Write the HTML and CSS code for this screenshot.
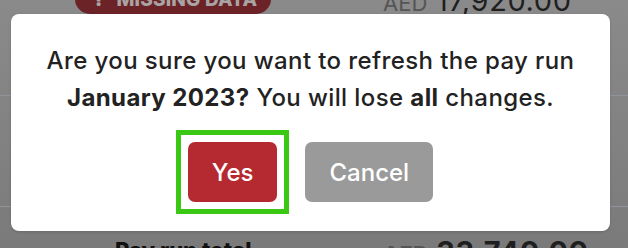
FILE: index.html
```html
<!DOCTYPE html>
<html lang="en">
<head>
<meta charset="utf-8">
<title>Refresh pay run</title>
<link rel="stylesheet" href="styles.css">
</head>
<body>
<div class="page">
  <div class="row row-top">
    <span class="badge"><span class="badge-icon">!</span>MISSING DATA</span>
    <span class="amount"><span class="cur">AED</span> 17,920.00</span>
  </div>
  <div class="row row-mid"></div>
  <div class="row row-total">
    <span class="total-label">Pay run total</span>
    <span class="amount amount-bold"><span class="cur">AED</span> 33,740.00</span>
  </div>
</div>

<div class="modal" role="dialog">
  <p class="message">Are you sure you want to refresh the pay run<br><b>January 2023?</b> You will lose <b>all</b> changes.</p>
  <div class="actions">
    <button class="btn btn-yes">Yes</button>
    <button class="btn btn-cancel">Cancel</button>
  </div>
</div>
</body>
</html>
```
FILE: styles.css
```css
html, body {
  margin: 0;
  padding: 0;
  width: 628px;
  height: 248px;
  overflow: hidden;
}
body {
  position: relative;
  font-family: Inter, "Noto Sans", sans-serif;
  background: linear-gradient(to bottom, #8a8a8a 0%, #818181 60%, #7a7a7a 100%);
}

.page {
  margin-top: -22px;
  height: 270px;
  overflow: hidden;
}
.row {
  display: grid;
  grid-template-columns: 308px 1fr;
  padding-left: 75px;
  border-bottom: 1px solid #8f939a;
  box-sizing: border-box;
}
.row-top {
  height: 118px;
  padding-top: 6px;
  align-items: start;
}
.row-mid {
  height: 111px;
}
.row-total {
  height: 41px;
  padding-top: 30px;
  padding-left: 115px;
  grid-template-columns: 268px 1fr;
  border-bottom: none;
}

.badge {
  justify-self: start;
  display: inline-flex;
  align-items: center;
  gap: 14px;
  height: 30px;
  width: 196px;
  box-sizing: border-box;
  padding-left: 20px;
  border-radius: 15px;
  background: #6b2327;
  color: #a9a3a3;
  font-weight: 800;
  font-size: 19px;
  letter-spacing: 0.2px;
}
.badge-icon {
  font-weight: 900;
}

.amount {
  font-size: 29px;
  font-weight: 400;
  letter-spacing: 0.6px;
  color: #1f1f1f;
  line-height: 30px;
  margin-top: 2px;
}
.amount .cur {
  font-size: 22px;
  letter-spacing: 0;
  color: #555;
}
.amount-bold {
  font-weight: 700;
  margin-top: 0;
}
.total-label {
  font-size: 22px;
  font-weight: 800;
  color: #111;
}

.modal {
  position: absolute;
  left: 11px;
  top: 14px;
  width: 599px;
  height: 217px;
  box-sizing: border-box;
  background: #fff;
  border-radius: 8px;
  box-shadow: 0 1px 3px rgba(0, 0, 0, 0.15);
  display: flex;
  flex-direction: column;
  align-items: center;
  padding-top: 28px;
}
.message {
  margin: 0;
  text-align: center;
  font-size: 24px;
  letter-spacing: 0.4px;
  line-height: 37px;
  font-weight: 500;
  color: #222;
}
.message b {
  font-weight: 700;
}

.actions {
  margin-top: 26px;
  display: flex;
  gap: 28px;
  justify-content: center;
}
.btn {
  height: 60px;
  padding: 0 24px;
  border: none;
  border-radius: 7px;
  font-family: inherit;
  font-size: 24px;
  font-weight: 500;
  color: #fff;
}
.btn-yes {
  position: relative;
  background: #b52a30;
}
.btn-yes::after {
  content: "";
  position: absolute;
  inset: -12px;
  border: 5px solid #3ac815;
}
.btn-cancel {
  background: #9a9a9a;
}
```
